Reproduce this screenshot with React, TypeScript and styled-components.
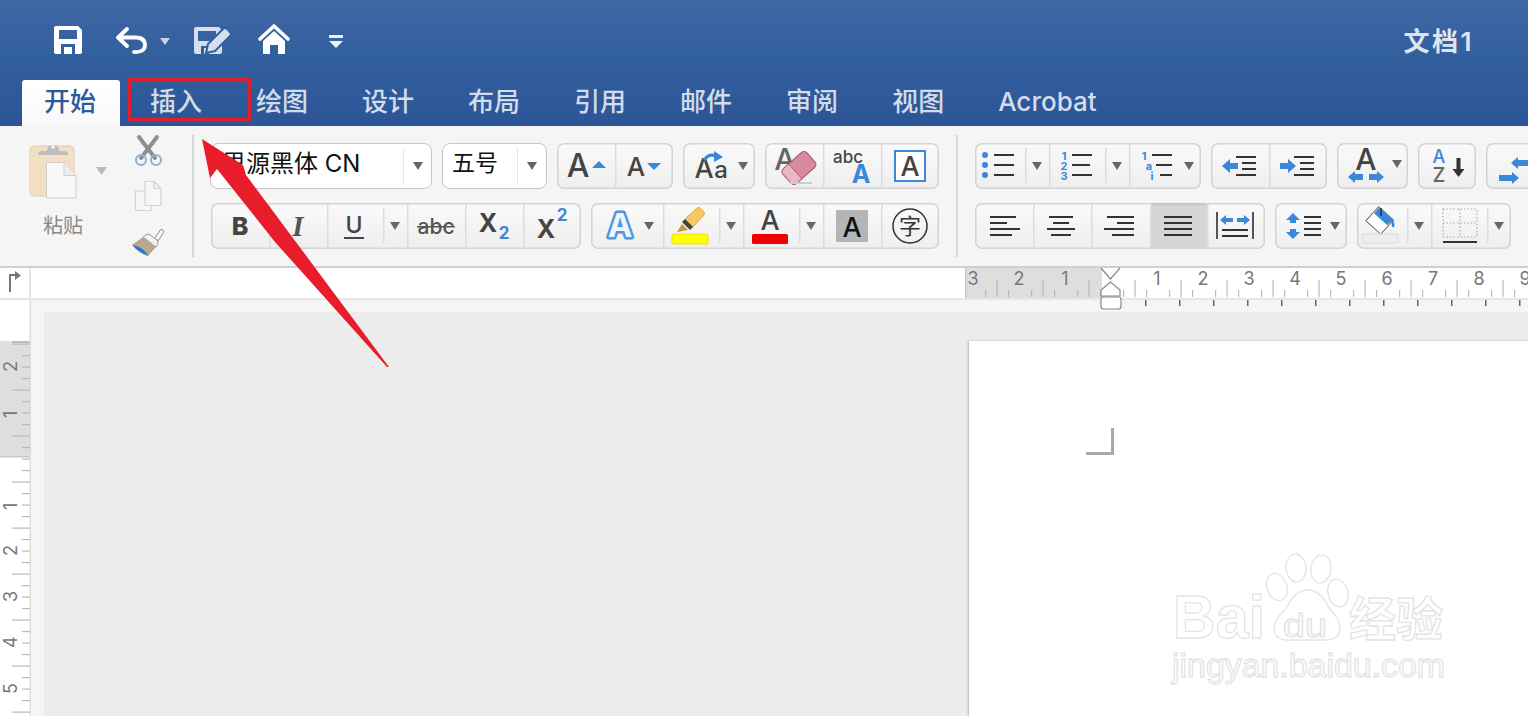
import React from "react";
import styled, { createGlobalStyle } from "styled-components";

const Global = createGlobalStyle`
  html, body { margin: 0; padding: 0; background: #fff; }
  body { font-family: Inter, "Noto Sans CJK SC", sans-serif; }
`;

const CJK = `"Noto Sans CJK SC", "Noto Sans", sans-serif`;
const LAT = `Inter, "Noto Sans CJK SC", sans-serif`;

const Screen = styled.div`
  position: relative;
  width: 1528px;
  height: 716px;
  overflow: hidden;
  display: flex;
  flex-direction: column;
`;
const Header = styled.header`
  background: linear-gradient(#3f67a5 0%, #33609f 40%, #2b5597 100%);
  height: 126px;
  flex: none;
`;
const TitleRow = styled.div`
  height: 80px;
  display: flex;
  align-items: center;
  padding: 0 54px;
`;
const QuickIcon = styled.svg<{ $ml?: number }>`
  margin-left: ${(p) => p.$ml ?? 0}px;
  display: block;
  flex: none;
`;
const DocTitle = styled.div`
  margin-left: auto;
  font: 600 26px ${LAT};
  color: #dfe5f0;
  letter-spacing: 2.5px;
  padding-bottom: 2px;
`;
const TabRow = styled.nav`
  height: 46px;
  display: flex;
  gap: 8px;
  padding-left: 22px;
`;
const Tab = styled.div<{ $active?: boolean }>`
  padding: 0 24px 0 22px;
  height: 46px;
  font: 500 26px/43px ${LAT};
  color: ${(p) => (p.$active ? "#2d5a9c" : "#d3dcea")};
  background: ${(p) => (p.$active ? "linear-gradient(#fff, #f8f8f8)" : "transparent")};
  border-radius: 3px 3px 0 0;
  white-space: nowrap;
`;
const Ribbon = styled.section`
  height: 142px;
  flex: none;
  box-sizing: border-box;
  background: #f5f5f5;
  border-bottom: 2px solid #cfcfcf;
  display: flex;
  overflow: hidden;
`;
const PasteArea = styled.div`
  width: 192px;
  flex: none;
  display: flex;
`;
const PasteStack = styled.div`
  width: 105px;
  padding: 14px 0 0 20px;
  flex: none;
`;
const PasteLabel = styled.div`
  font: 400 20px/28px ${CJK};
  color: #8a8a8a;
  padding: 9px 0 0 23px;
`;
const ClipTools = styled.div`
  padding-top: 4px;
`;
const Divider = styled.div`
  width: 2px;
  height: 122px;
  margin-top: 9px;
  background: #d6d6d6;
  flex: none;
`;
const ToolColumn = styled.div<{ $ml: number; $w?: number }>`
  margin-left: ${(p) => p.$ml}px;
  ${(p) => (p.$w ? `width: ${p.$w}px;` : "")}
  flex: none;
  padding-top: 17px;
  display: flex;
  flex-direction: column;
  gap: 14px;
`;
const ToolRow = styled.div<{ $indent?: number; $gap?: number }>`
  display: flex;
  gap: ${(p) => p.$gap ?? 10}px;
  margin-left: ${(p) => p.$indent ?? 0}px;
`;
const Group = styled.div`
  display: flex;
  height: 46px;
  border-radius: 7px;
  background: linear-gradient(#fafafa, #eeeeee);
  box-shadow: inset 0 0 0 1.5px #d3d3d3;
  flex: none;
`;
const Cell = styled.div<{ $w: number; $first?: boolean; $on?: boolean }>`
  width: ${(p) => p.$w}px;
  height: 46px;
  flex: none;
  background: ${(p) => (p.$on ? "linear-gradient(#c2c2c2, #d6d6d6 8%, #d6d6d6)" : "transparent")};
  box-shadow: ${(p) => (p.$first ? "none" : "inset 1.5px 0 0 #dcdcdc")};
`;
const Select = styled.div<{ $w: number; $size: number; $pad: number }>`
  width: ${(p) => p.$w}px;
  height: 46px;
  box-sizing: border-box;
  flex: none;
  display: flex;
  align-items: center;
  background: #fff;
  border: 1.5px solid #c6c6c6;
  border-radius: 8px;
  padding-left: ${(p) => p.$pad}px;
  font: 400 ${(p) => p.$size}px/1 ${LAT};
  color: #111;
`;
const SelectValue = styled.span`
  flex: 1;
  white-space: nowrap;
  padding-bottom: 5px;
`;
const SelectCaretBox = styled.div<{ $w: number }>`
  width: ${(p) => p.$w}px;
  height: 36px;
  border-left: 1.5px solid #e6e6e6;
  display: flex;
  align-items: center;
  justify-content: center;
  flex: none;
`;
const Caret = styled.i`
  display: block;
  width: 0;
  height: 0;
  border-left: 5px solid transparent;
  border-right: 5px solid transparent;
  border-top: 8px solid #666;
`;
const RulerRow = styled.div`
  height: 32px;
  box-sizing: border-box;
  flex: none;
  background: #fff;
  border-bottom: 2px solid #e6e6e6;
  display: flex;
  position: relative;
  z-index: 1;
`;
const Corner = styled.div`
  width: 31px;
  box-sizing: border-box;
  border-right: 2px solid #e6e6e6;
  flex: none;
`;
const CornerIcon = styled.svg`
  display: block;
`;
const HRuler = styled.svg`
  margin-left: auto;
  display: block;
  overflow: visible;
  flex: none;
`;
const Main = styled.div`
  flex: 1;
  display: flex;
  min-height: 0;
`;
const VRuler = styled.svg`
  display: block;
  flex: none;
`;
const Canvas = styled.div`
  flex: 1;
  background: #f5f5f5;
  padding: 12px 0 0 13px;
  display: flex;
`;
const Desk = styled.div`
  flex: 1;
  background: #ececec;
  padding: 29px 0 0 925px;
  display: flex;
`;
const Page = styled.div`
  flex: 1;
  background: #fff;
  box-shadow: -1px 0 2px #b5b5b5;
  padding: 87px 0 0 117px;
`;
const CropMark = styled.div`
  width: 25px;
  height: 24px;
  border-right: 3px solid #aaa;
  border-bottom: 3px solid #aaa;
`;
const RedBox = styled.div`
  position: absolute;
  left: 128px;
  top: 78px;
  width: 123px;
  height: 43px;
  box-sizing: border-box;
  border: 3px solid #e01f2b;
  border-radius: 1px;
  z-index: 2;
`;
const ArrowLayer = styled.svg`
  position: absolute;
  left: 0;
  top: 0;
  z-index: 2;
  pointer-events: none;
`;
const Watermark = styled.svg`
  position: absolute;
  left: 1160px;
  top: 545px;
  pointer-events: none;
`;
const ArtSvg = styled.svg`
  display: block;
  overflow: visible;
`;

const Art: React.FC<{ x: number; y?: number; w: number; h?: number; children?: React.ReactNode }> = ({ x, y = 0, w, h = 46, children }) => (
  <ArtSvg width={w} height={h} viewBox={`${x} ${y} ${w} ${h}`}>
    {children}
  </ArtSvg>
);

const T: React.FC<{ x: number; y: number; s: number; c?: string; w?: number; a?: "start" | "middle" | "end"; f?: string; i?: boolean; children: React.ReactNode; stroke?: string; sw?: number }> = ({ x, y, s, c = "#444", w = 500, a = "middle", f = LAT, i, children, stroke, sw }) => (
  <text x={x} y={y} fontSize={s} fill={c} fontWeight={w} textAnchor={a} fontFamily={f} fontStyle={i ? "italic" : "normal"} stroke={stroke} strokeWidth={sw} strokeLinejoin="round" paintOrder="stroke">
    {children}
  </text>
);

const Tri: React.FC<{ x: number; y: number; c?: string }> = ({ x, y, c = "#666" }) => <path d={`M${x - 5} ${y - 4}h10l-5 8z`} fill={c} />;
const Sep: React.FC<{ x: number; y: number }> = ({ x, y }) => <rect x={x} y={y} width="1.5" height="35" fill="#dcdcdc" />;
const Lines: React.FC<{ l: [number, number, number][]; c?: string }> = ({ l, c = "#333" }) => (
  <g stroke={c} strokeWidth="2">
    {l.map(([a, b, y], k) => (
      <line key={k} x1={a} x2={b} y1={y} y2={y} />
    ))}
  </g>
);
const BLUE = "#3b87da";
const R1 = 143;
const R2 = 203;

const PasteIcon = () => (
  <Art x={20} y={140} w={90} h={62}>
    <rect x="30" y="146" width="44" height="50" rx="4" fill="#f2dfc4" stroke="#e2cfb2" />
    <path d="M38 155q0-4 4-4h5q0-6 6-6t6 6h5q4 0 4 4z" fill="#bcbcbc" />
    <circle cx="53" cy="147" r="2" fill="#eee" />
    <path d="M46.500 162.500H64l12 13V198H46.500z" fill="#f8f8f8" stroke="#cfcfcf" />
    <path d="M64 162.500V175.500H76" fill="#ededed" stroke="#cfcfcf" />
    <path d="M96 167h11l-5.500 8z" fill="#b9b9b9" />
  </Art>
);
const ClipIcons = () => (
  <Art x={125} y={130} w={50} h={130}>
    <g stroke="#8f8f8f" strokeWidth="4" strokeLinecap="round">
      <line x1="139" y1="137" x2="155" y2="158" />
      <line x1="157" y1="137" x2="141" y2="158" />
    </g>
    <g fill="none" stroke="#8bb1dc" strokeWidth="2">
      <circle cx="141" cy="160" r="5" />
      <circle cx="156" cy="160" r="5" />
    </g>
    <path d="M145 181.500h9l7 7v17h-16zM154 181.500v7h7M145 191h-9.500v19.500H151v-5" fill="#f7f7f7" stroke="#d2d2d2" strokeWidth="1.200" />
    <path d="M154 239l5-7q1-3 3-2.500t1.500 3l-5 8z" fill="#f5f5f5" stroke="#8d8d8d" strokeWidth="1" />
    <path d="M143 237q3-3 6-3l9 7q0 4-2 6z" fill="#f2f2f2" stroke="#9a9a9a" strokeWidth="1" />
    <path d="M132 245l11-8 13 10-8 9z" fill="#b9a88f" />
    <path d="M132 245q6 1 9 3 5 3 7 8-9-3-16-11z" fill="#2f78c8" />
  </Art>
);

const FontTools = () => (
  <ToolColumn $ml={16} $w={746}>
    <ToolRow>
      <Select $w={222} $size={24} $pad={11}>
        <SelectValue>思源黑体 CN</SelectValue>
        <SelectCaretBox $w={27}>
          <Caret />
        </SelectCaretBox>
      </Select>
      <Select $w={105} $size={23} $pad={9}>
        <SelectValue>五号</SelectValue>
        <SelectCaretBox $w={28}>
          <Caret />
        </SelectCaretBox>
      </Select>
      <Group>
        <Cell $w={58} $first>
          <Art x={557} y={R1} w={58}>
            <T x={578} y={177} s={32}>A</T>
            <path d="M592 168l7-7 7 7z" fill={BLUE} />
          </Art>
        </Cell>
        <Cell $w={58}>
          <Art x={615} y={R1} w={58}>
            <T x={636} y={176} s={26}>A</T>
            <path d="M647 163h14l-7 7z" fill={BLUE} />
          </Art>
        </Cell>
      </Group>
      <Group>
        <Cell $w={72} $first>
          <Art x={683} y={R1} w={72}>
            <T x={704} y={178} s={27}>A</T>
            <T x={721} y={178} s={24}>a</T>
            <path d="M704 160q5-7 12-4" fill="none" stroke={BLUE} strokeWidth="3" />
            <path d="M714 151l9 6-9 5z" fill={BLUE} />
            <Tri x={743} y={166} />
          </Art>
        </Cell>
      </Group>
      <Group>
        <Cell $w={58} $first>
          <Art x={765} y={R1} w={58}>
            <T x={785} y={170} s={30} c="#666">A</T>
            <g transform="rotate(-42 799 168)">
              <rect x="783" y="158" width="32" height="20" rx="4" fill="#d98b9d" stroke="#a64e68" />
              <path d="M783 162q0-4 4-4h7v20h-7q-4 0-4-4z" fill="#eab8c5" stroke="#a64e68" strokeWidth=".8" />
            </g>
            <rect x="790" y="182" width="22" height="2" fill="#ccc" />
          </Art>
        </Cell>
        <Cell $w={58}>
          <Art x={823} y={R1} w={58}>
            <T x={848} y={163} s={17}>abc</T>
            <T x={861} y={183} s={25} c={BLUE} w={700}>A</T>
          </Art>
        </Cell>
        <Cell $w={58}>
          <Art x={881} y={R1} w={58}>
            <rect x="895" y="151" width="30" height="30" fill="#fff" stroke={BLUE} strokeWidth="2" />
            <T x={910} y={176} s={27}>A</T>
          </Art>
        </Cell>
      </Group>
    </ToolRow>
    <ToolRow $indent={1}>
      <Group>
        <Cell $w={58} $first>
          <Art x={211} y={R2} w={58}>
            <T x={240} y={235} s={25} w={800}>B</T>
          </Art>
        </Cell>
        <Cell $w={58}>
          <Art x={269} y={R2} w={58}>
            <T x={298} y={236} s={29} w={700} i f={`"Liberation Serif", serif`} c="#555">I</T>
          </Art>
        </Cell>
        <Cell $w={80}>
          <Art x={327} y={R2} w={80}>
            <T x={354} y={233} s={23} c="#444">U</T>
            <rect x="344" y="237" width="20" height="2" fill="#444" />
            <Sep x={383} y={208} />
            <Tri x={395} y={226} />
          </Art>
        </Cell>
        <Cell $w={58}>
          <Art x={407} y={R2} w={58}>
            <T x={436} y={234} s={21} c="#555">abc</T>
            <rect x="417" y="226" width="38" height="1.500" fill="#555" />
          </Art>
        </Cell>
        <Cell $w={58}>
          <Art x={465} y={R2} w={58}>
            <T x={488} y={232} s={25} w={700}>X</T>
            <T x={504} y={239} s={17} w={700} c={BLUE}>2</T>
          </Art>
        </Cell>
        <Cell $w={58}>
          <Art x={523} y={R2} w={58}>
            <T x={546} y={238} s={25} w={700}>X</T>
            <T x={562} y={221} s={17} w={700} c={BLUE}>2</T>
          </Art>
        </Cell>
      </Group>
      <Group>
        <Cell $w={72} $first>
          <Art x={591} y={R2} w={72}>
            <T x={620} y={237} s={33} w={700} c="#eef5fc" stroke="#4a97e2" sw={5}>A</T>
            <Tri x={649} y={226} />
          </Art>
        </Cell>
        <Cell $w={80}>
          <Art x={663} y={R2} w={80}>
            <path d="M697 208q2-1 3 0l4 4q1 2 0 3l-11 12-8-8z" fill="#f6c766" stroke="#e0a840" />
            <path d="M685 219l8 8-3 3-8-8z" fill="#444" />
            <path d="M682 224l6 6-11 2z" fill="#c9973a" />
            <rect x="672" y="234" width="36" height="10" rx="2" fill="#ffff00" stroke="#e6e600" />
            <Sep x={719} y={208} />
            <Tri x={731} y={226} />
          </Art>
        </Cell>
        <Cell $w={80}>
          <Art x={743} y={R2} w={80}>
            <T x={770} y={230} s={27}>A</T>
            <rect x="752" y="234" width="36" height="10" rx="1.500" fill="#f00000" />
            <Sep x={799} y={208} />
            <Tri x={811} y={226} />
          </Art>
        </Cell>
        <Cell $w={58}>
          <Art x={823} y={R2} w={58}>
            <rect x="836" y="210" width="32" height="32" rx="1" fill="#b5b5b5" />
            <T x={852} y={237} s={27} c="#111">A</T>
          </Art>
        </Cell>
        <Cell $w={58}>
          <Art x={881} y={R2} w={58}>
            <circle cx="910" cy="226" r="17" fill="none" stroke="#333" strokeWidth="1.500" />
            <T x={910} y={234} s={22} c="#333" f={CJK} w={400}>字</T>
          </Art>
        </Cell>
      </Group>
    </ToolRow>
  </ToolColumn>
);

const ParaTools = () => (
  <ToolColumn $ml={17}>
    <ToolRow>
      <Group>
        <Cell $w={74} $first>
          <Art x={975} y={R1} w={74}>
            <g fill={BLUE}>
              <circle cx="985" cy="155" r="3" />
              <circle cx="985" cy="165" r="3" />
              <circle cx="985" cy="175" r="3" />
            </g>
            <Lines l={[[994, 1014, 155], [994, 1014, 165], [994, 1014, 175]]} />
            <Sep x={1025} y={148} />
            <Tri x={1037} y={166} />
          </Art>
        </Cell>
        <Cell $w={80}>
          <Art x={1049} y={R1} w={80}>
            <T x={1064} y={160} s={11} c={BLUE} w={700}>1</T>
            <T x={1064} y={170} s={11} c={BLUE} w={700}>2</T>
            <T x={1064} y={180} s={11} c={BLUE} w={700}>3</T>
            <Lines l={[[1072, 1092, 155], [1072, 1090, 165], [1072, 1092, 175]]} />
            <Sep x={1105} y={148} />
            <Tri x={1117} y={166} />
          </Art>
        </Cell>
        <Cell $w={72}>
          <Art x={1129} y={R1} w={72}>
            <T x={1144} y={160} s={11} c={BLUE} w={700}>1</T>
            <T x={1149} y={170} s={11} c={BLUE} w={700}>a</T>
            <T x={1152} y={180} s={11} c={BLUE} w={700}>i</T>
            <Lines l={[[1152, 1172, 155], [1156, 1172, 165], [1160, 1172, 175]]} />
            <Tri x={1189} y={166} />
          </Art>
        </Cell>
      </Group>
      <Group>
        <Cell $w={58} $first>
          <Art x={1211} y={R1} w={58}>
            <path d="M1222 166l8-7v4h8v6h-8v4z" fill={BLUE} />
            <Lines l={[[1236, 1256, 157], [1242, 1256, 163], [1242, 1256, 169], [1236, 1256, 175]]} />
          </Art>
        </Cell>
        <Cell $w={58}>
          <Art x={1269} y={R1} w={58}>
            <path d="M1280 163h8v-4l8 7-8 7v-4h-8z" fill={BLUE} />
            <Lines l={[[1294, 1314, 157], [1300, 1314, 163], [1300, 1314, 169], [1294, 1314, 175]]} />
          </Art>
        </Cell>
      </Group>
      <Group>
        <Cell $w={71} $first>
          <Art x={1337} y={R1} w={71}>
            <T x={1366} y={170} s={30}>A</T>
            <path d="M1348 177l7-6v3h8v6h-8v3zM1384 177l-7-6v3h-8v6h8v3z" fill={BLUE} />
            <Tri x={1397} y={164} />
          </Art>
        </Cell>
      </Group>
      <Group>
        <Cell $w={58} $first>
          <Art x={1419} y={R1} w={58}>
            <T x={1440} y={163} s={18} c={BLUE}>A</T>
            <T x={1440} y={182} s={20} c="#666">Z</T>
            <path d="M1457.500 158h4v11h4l-6 8-6-8h4z" fill="#333" />
          </Art>
        </Cell>
      </Group>
      <Group>
        <Cell $w={60} $first>
          <Art x={1487} y={R1} w={60}>
            <path d="M1512 163l7-6v3h12v6h-12v3zM1520 178l-7-6v3h-13v6h13v3z" fill={BLUE} />
          </Art>
        </Cell>
      </Group>
    </ToolRow>
    <ToolRow>
      <Group>
        <Cell $w={58} $first>
          <Art x={975} y={R2} w={58}>
            <Lines l={[[990, 1016, 217], [990, 1007, 223], [990, 1020, 229], [990, 1012, 235]]} />
          </Art>
        </Cell>
        <Cell $w={58}>
          <Art x={1033} y={R2} w={58}>
            <Lines l={[[1049, 1073, 217], [1053, 1069, 223], [1047, 1075, 229], [1051, 1071, 235]]} />
          </Art>
        </Cell>
        <Cell $w={59}>
          <Art x={1091} y={R2} w={59}>
            <Lines l={[[1107, 1134, 217], [1117, 1134, 223], [1104, 1134, 229], [1112, 1134, 235]]} />
          </Art>
        </Cell>
        <Cell $w={57} $on>
          <Art x={1150} y={R2} w={57}>
            <Lines l={[[1164, 1192, 217], [1164, 1192, 223], [1164, 1192, 229], [1164, 1192, 235]]} />
          </Art>
        </Cell>
        <Cell $w={58}>
          <Art x={1207} y={R2} w={58}>
            <rect x="1216" y="212" width="2" height="27" fill="#555" />
            <rect x="1252" y="212" width="2" height="27" fill="#555" />
            <path d="M1220 220l6-5v3h7v4h-7v3zM1250 220l-6-5v3h-7v4h7v3z" fill={BLUE} />
            <Lines l={[[1222, 1248, 230], [1222, 1248, 236]]} />
          </Art>
        </Cell>
      </Group>
      <Group>
        <Cell $w={72} $first>
          <Art x={1275} y={R2} w={72}>
            <path d="M1293 213l7 7h-4v3h-6v-3h-4zM1293 239l7-7h-4v-3h-6v3h-4z" fill={BLUE} />
            <Lines l={[[1304, 1321, 217], [1304, 1321, 223], [1304, 1321, 229], [1304, 1321, 235]]} />
            <Tri x={1335} y={226} />
          </Art>
        </Cell>
      </Group>
      <Group>
        <Cell $w={74} $first>
          <Art x={1357} y={R2} w={74}>
            <g transform="rotate(42 1380 220)">
              <rect x="1370" y="211" width="20" height="19" fill="#fff" stroke="#666" />
              <rect x="1371" y="211" width="18" height="8" fill={BLUE} />
            </g>
            <path d="M1381 208v8" stroke="#333" strokeWidth="1.500" />
            <path d="M1390 219q4 3 3 8" stroke={BLUE} strokeWidth="2.500" fill="none" />
            <rect x="1362" y="234" width="36" height="9" rx="1.500" fill="#eeeeee" stroke="#dadada" />
            <Sep x={1407} y={208} />
            <Tri x={1419} y={226} />
          </Art>
        </Cell>
        <Cell $w={80}>
          <Art x={1431} y={R2} w={80}>
            <g stroke="#aaa" strokeWidth="1.200" strokeDasharray="1.500 2" fill="none">
              <rect x="1443" y="209" width="34" height="28" />
              <line x1="1460" x2="1460" y1="209" y2="237" />
              <line x1="1443" x2="1477" y1="223" y2="223" />
            </g>
            <rect x="1443" y="241" width="34" height="2" fill="#333" />
            <Sep x={1487} y={208} />
            <Tri x={1499} y={226} />
          </Art>
        </Cell>
      </Group>
    </ToolRow>
  </ToolColumn>
);

const quarter = (from: number, to: number) => {
  const out: number[] = [];
  for (let v = from; v <= to; v += 11.5) out.push(v);
  return out;
};

const HorizontalRuler = () => {
  const ticks = quarter(973.5, 1530);
  const nums: [number, string][] = [
    [973, "3"], [1019, "2"], [1065, "1"], [1157, "1"], [1203, "2"], [1249, "3"], [1295, "4"],
    [1341, "5"], [1387, "6"], [1433, "7"], [1479, "8"], [1525, "9"],
  ];
  const lower: number[] = [];
  for (let v = 1145; v < 1530; v += 34) lower.push(v);
  return (
    <HRuler width={563} height={30} viewBox="965 268 563 30">
      <rect x="965" y="268" width="137" height="30" fill="#dedede" />
      <rect x="965" y="268" width="1.500" height="30" fill="#c8c8c8" />
      {ticks.map((v, k) => {
        const tall = k % 4 === 2;
        const num = k % 4 === 0;
        if (num) return null;
        return <rect key={v} x={v} y={tall ? 280 : 290} width="1.200" height={tall ? 17 : 7} fill="#b9b9b9" />;
      })}
      {nums.map(([x, n]) => (
        <T key={x + n} x={x} y={285} s={18} c="#777" w={400}>{n}</T>
      ))}
      {lower.map((v) => (
        <rect key={v} x={v} y={300} width="1.500" height="6" fill="#666" />
      ))}
      <path d="M1101 268l9.500 11 9.500-11" fill="#fff" stroke="#888" strokeWidth="1.200" />
      <path d="M1101 296v-6l9.500-8 9.500 8v6z" fill="#fff" stroke="#888" strokeWidth="1.200" />
      <rect x="1101" y="297" width="20" height="12" rx="2.500" fill="#fff" stroke="#888" strokeWidth="1.200" />
    </HRuler>
  );
};

const VerticalRuler = () => {
  const ticks = quarter(343, 716);
  const nums: [number, string][] = [
    [365, "2"], [411, "1"], [503, "1"], [549, "2"], [595, "3"], [641, "4"], [687, "5"],
  ];
  return (
    <VRuler width={31} height={416} viewBox="0 300 31 416">
      <rect width="31" height="416" x="0" y="300" fill="#fff" />
      <rect x="0" y="341" width="30" height="116" fill="#dedede" />
      <rect x="12" y="341" width="18" height="2" fill="#bdbdbd" />
      <rect x="0" y="456" width="30" height="1.500" fill="#c8c8c8" />
      <rect x="29.500" y="300" width="1.500" height="416" fill="#dedede" />
      {ticks.map((v, k) => {
        const tall = k % 4 === 0;
        return <rect key={v} x={tall ? 12 : 22} y={v + 0.5} width={tall ? 18 : 8} height="1.200" fill="#b9b9b9" />;
      })}
      {nums.map(([y, n]) => (
        <text key={y} x={0} y={0} transform={`translate(17 ${y + 7}) rotate(-90)`} fontSize="18" fill="#777" fontFamily={LAT}>
          {n}
        </text>
      ))}
    </VRuler>
  );
};

const tabs = ["开始", "插入", "绘图", "设计", "布局", "引用", "邮件", "审阅", "视图", "Acrobat"];

export default function App() {
  return (
    <Screen>
      <Global />
      <Header>
        <TitleRow>
          <QuickIcon width={28} height={40} viewBox="54 20 28 40">
            <path fillRule="evenodd" fill="#fff" d="M56 26h22l4 4v22q0 2-2 2H56q-2 0-2-2V28q0-2 2-2zM59 30v9h18v-9zM61 44v10h3v-7h8v7h3V44z" />
          </QuickIcon>
          <QuickIcon $ml={34} width={31} height={40} viewBox="116 20 31 40">
            <path d="M127 29l-9 8.500 9 8.500M118 37.500h17q10 0 10 7.500t-11 7" fill="none" stroke="#fff" strokeWidth="3.800" strokeLinecap="round" strokeLinejoin="round" />
          </QuickIcon>
          <QuickIcon $ml={13} width={10} height={40} viewBox="160 20 10 40">
            <path d="M160 38h10l-5 7z" fill="#c8d3e6" />
          </QuickIcon>
          <QuickIcon $ml={24} width={37} height={40} viewBox="194 20 37 40">
            <path fillRule="evenodd" fill="#d5deef" d="M196 27h23l3 3v22q0 2-2 2h-24q-2 0-2-2V29q0-2 2-2zM198 31v10h18V31zM201 46v8h8v-8z" />
            <rect x="204" y="48" width="3" height="6" fill="#d5deef" />
            <path d="M208 44l15-15q2-2 4 0l3 3q2 2 0 4l-15 15-9 2z" fill="#d5deef" stroke="#33609f" strokeWidth="2" />
          </QuickIcon>
          <QuickIcon $ml={27} width={32} height={40} viewBox="258 20 32 40">
            <path d="M260 39l14-13 14 13" fill="none" stroke="#fff" strokeWidth="3.600" strokeLinecap="round" strokeLinejoin="round" />
            <path d="M263 41l11-10 11 10v13h-7v-9h-8v9h-7z" fill="#fff" />
          </QuickIcon>
          <QuickIcon $ml={39} width={14} height={40} viewBox="329 20 14 40">
            <rect x="329" y="35" width="14" height="3" fill="#eef2f8" />
            <path d="M329 41h14l-7 7z" fill="#eef2f8" />
          </QuickIcon>
          <DocTitle>文档1</DocTitle>
        </TitleRow>
        <TabRow>
          {tabs.map((t, k) => (
            <Tab key={t} $active={k === 0}>{t}</Tab>
          ))}
        </TabRow>
      </Header>
      <Ribbon>
        <PasteArea>
          <PasteStack>
            <PasteIcon />
            <PasteLabel>粘贴</PasteLabel>
          </PasteStack>
          <ClipTools>
            <ClipIcons />
          </ClipTools>
        </PasteArea>
        <Divider />
        <FontTools />
        <Divider />
        <ParaTools />
      </Ribbon>
      <RulerRow>
        <Corner>
          <CornerIcon width="29" height="30" viewBox="0 268 29 30">
            <path d="M10 292v-17h6" fill="none" stroke="#777" strokeWidth="2" />
            <path d="M15 271l6 4.500-6 4.500z" fill="#777" />
          </CornerIcon>
        </Corner>
        <HorizontalRuler />
      </RulerRow>
      <Main>
        <VerticalRuler />
        <Canvas>
          <Desk>
            <Page>
              <CropMark />
            </Page>
          </Desk>
        </Canvas>
      </Main>
      <RedBox />
      <ArrowLayer width={1528} height={716} viewBox="0 0 1528 716">
        <path d="M202 139L243 165 246 175 389 367 387 367 275 242 217 169 210 178z" fill="#e81c2a" />
      </ArrowLayer>
      <Watermark width={300} height={150} viewBox="1160 545 300 150">
        <g fill="#fff" stroke="#e4e4e4" strokeWidth="1.300">
          <ellipse cx="1277" cy="587" rx="10" ry="14" transform="rotate(-20 1277 587)" />
          <ellipse cx="1296" cy="568" rx="10" ry="14" transform="rotate(-5 1296 568)" />
          <ellipse cx="1321" cy="569" rx="10" ry="14" transform="rotate(8 1321 569)" />
          <ellipse cx="1338" cy="593" rx="10" ry="14" transform="rotate(-15 1338 593)" />
          <path d="M1307 590q14 0 22 18 12 12 11 22-2 10-14 10h-38q-13 0-14-11 0-10 12-20 9-19 21-19z" />
          <text x="1173" y="638" fontSize="62" fontWeight="700" fontFamily={`"Liberation Sans", sans-serif`} textLength="92" lengthAdjust="spacingAndGlyphs">Bai</text>
          <text x="1283" y="637" fontSize="34" fontFamily={`"Liberation Sans", sans-serif`} textLength="44" lengthAdjust="spacingAndGlyphs">du</text>
          <text x="1349" y="636" fontSize="47" fontWeight="700" fontFamily={CJK}>经验</text>
          <text x="1172" y="677" fontSize="34" fontFamily={`"Liberation Sans", sans-serif`} textLength="273" lengthAdjust="spacingAndGlyphs">jingyan.baidu.com</text>
        </g>
      </Watermark>
    </Screen>
  );
}
